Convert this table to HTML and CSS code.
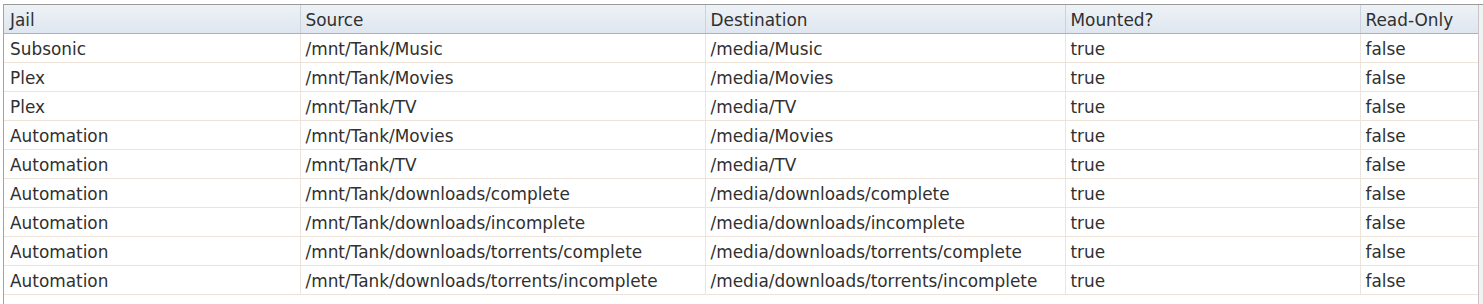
FILE: index.html
```html
<!DOCTYPE html>
<html>
<head>
<meta charset="utf-8">
<link rel="stylesheet" href="styles.css">
</head>
<body>
<div class="frame">
  <div class="gridwrap">
    <table class="grid">
      <colgroup>
        <col class="c-jail"><col class="c-src"><col class="c-dst"><col class="c-mnt"><col class="c-ro">
      </colgroup>
      <thead>
        <tr><th>Jail</th><th>Source</th><th>Destination</th><th>Mounted?</th><th>Read-Only</th></tr>
      </thead>
      <tbody>
        <tr><td>Subsonic</td><td>/mnt/Tank/Music</td><td>/media/Music</td><td>true</td><td>false</td></tr>
        <tr><td>Plex</td><td>/mnt/Tank/Movies</td><td>/media/Movies</td><td>true</td><td>false</td></tr>
        <tr><td>Plex</td><td>/mnt/Tank/TV</td><td>/media/TV</td><td>true</td><td>false</td></tr>
        <tr><td>Automation</td><td>/mnt/Tank/Movies</td><td>/media/Movies</td><td>true</td><td>false</td></tr>
        <tr><td>Automation</td><td>/mnt/Tank/TV</td><td>/media/TV</td><td>true</td><td>false</td></tr>
        <tr><td>Automation</td><td>/mnt/Tank/downloads/complete</td><td>/media/downloads/complete</td><td>true</td><td>false</td></tr>
        <tr><td>Automation</td><td>/mnt/Tank/downloads/incomplete</td><td>/media/downloads/incomplete</td><td>true</td><td>false</td></tr>
        <tr><td>Automation</td><td>/mnt/Tank/downloads/torrents/complete</td><td>/media/downloads/torrents/complete</td><td>true</td><td>false</td></tr>
        <tr><td>Automation</td><td>/mnt/Tank/downloads/torrents/incomplete</td><td>/media/downloads/torrents/incomplete</td><td>true</td><td>false</td></tr>
      </tbody>
    </table>
    <div class="scrollstrip"></div>
  </div>
</div>
</body>
</html>
```
FILE: styles.css
```css
html, body {
  margin: 0;
  padding: 0;
  background: #ffffff;
}
.frame {
  padding: 4px 0 0 3px;
}
.gridwrap {
  display: flex;
  align-items: stretch;
  height: 300px;
  border-left: 1px solid #a4a4a4;
  border-top: 1px solid #9a9a9a;
}
.grid {
  border-collapse: collapse;
  table-layout: fixed;
  width: 1474px;
  font-family: "DejaVu Sans", Verdana, sans-serif;
  font-size: 16.9px;
  color: #303030;
  align-self: flex-start;
}
.c-jail { width: 296px; }
.c-src { width: 405px; }
.c-dst { width: 360px; }
.c-mnt { width: 295px; }
.c-ro { width: 118px; }
.grid th {
  font-weight: normal;
  text-align: left;
  height: 27px;
  padding: 1px 4px 0 5px;
  background: linear-gradient(#eef2f7, #dfe6ef);
  border-bottom: 1px solid #a9b1bb;
  border-right: 1px solid #cbd2db;
  white-space: nowrap;
}
.grid td {
  height: 27px;
  padding: 1px 4px 0 5px;
  border-bottom: 1px solid #eee3d8;
  border-right: 1px solid #ece5dd;
  white-space: nowrap;
  overflow: hidden;
}
.grid th:first-child,
.grid td:first-child {
  padding-left: 6px;
}
.grid th:last-child,
.grid td:last-child {
  border-right: none;
}
.scrollstrip {
  flex: 1;
  border-left: 1px solid #c7c7c7;
  background: #f1f1f1;
}
```
